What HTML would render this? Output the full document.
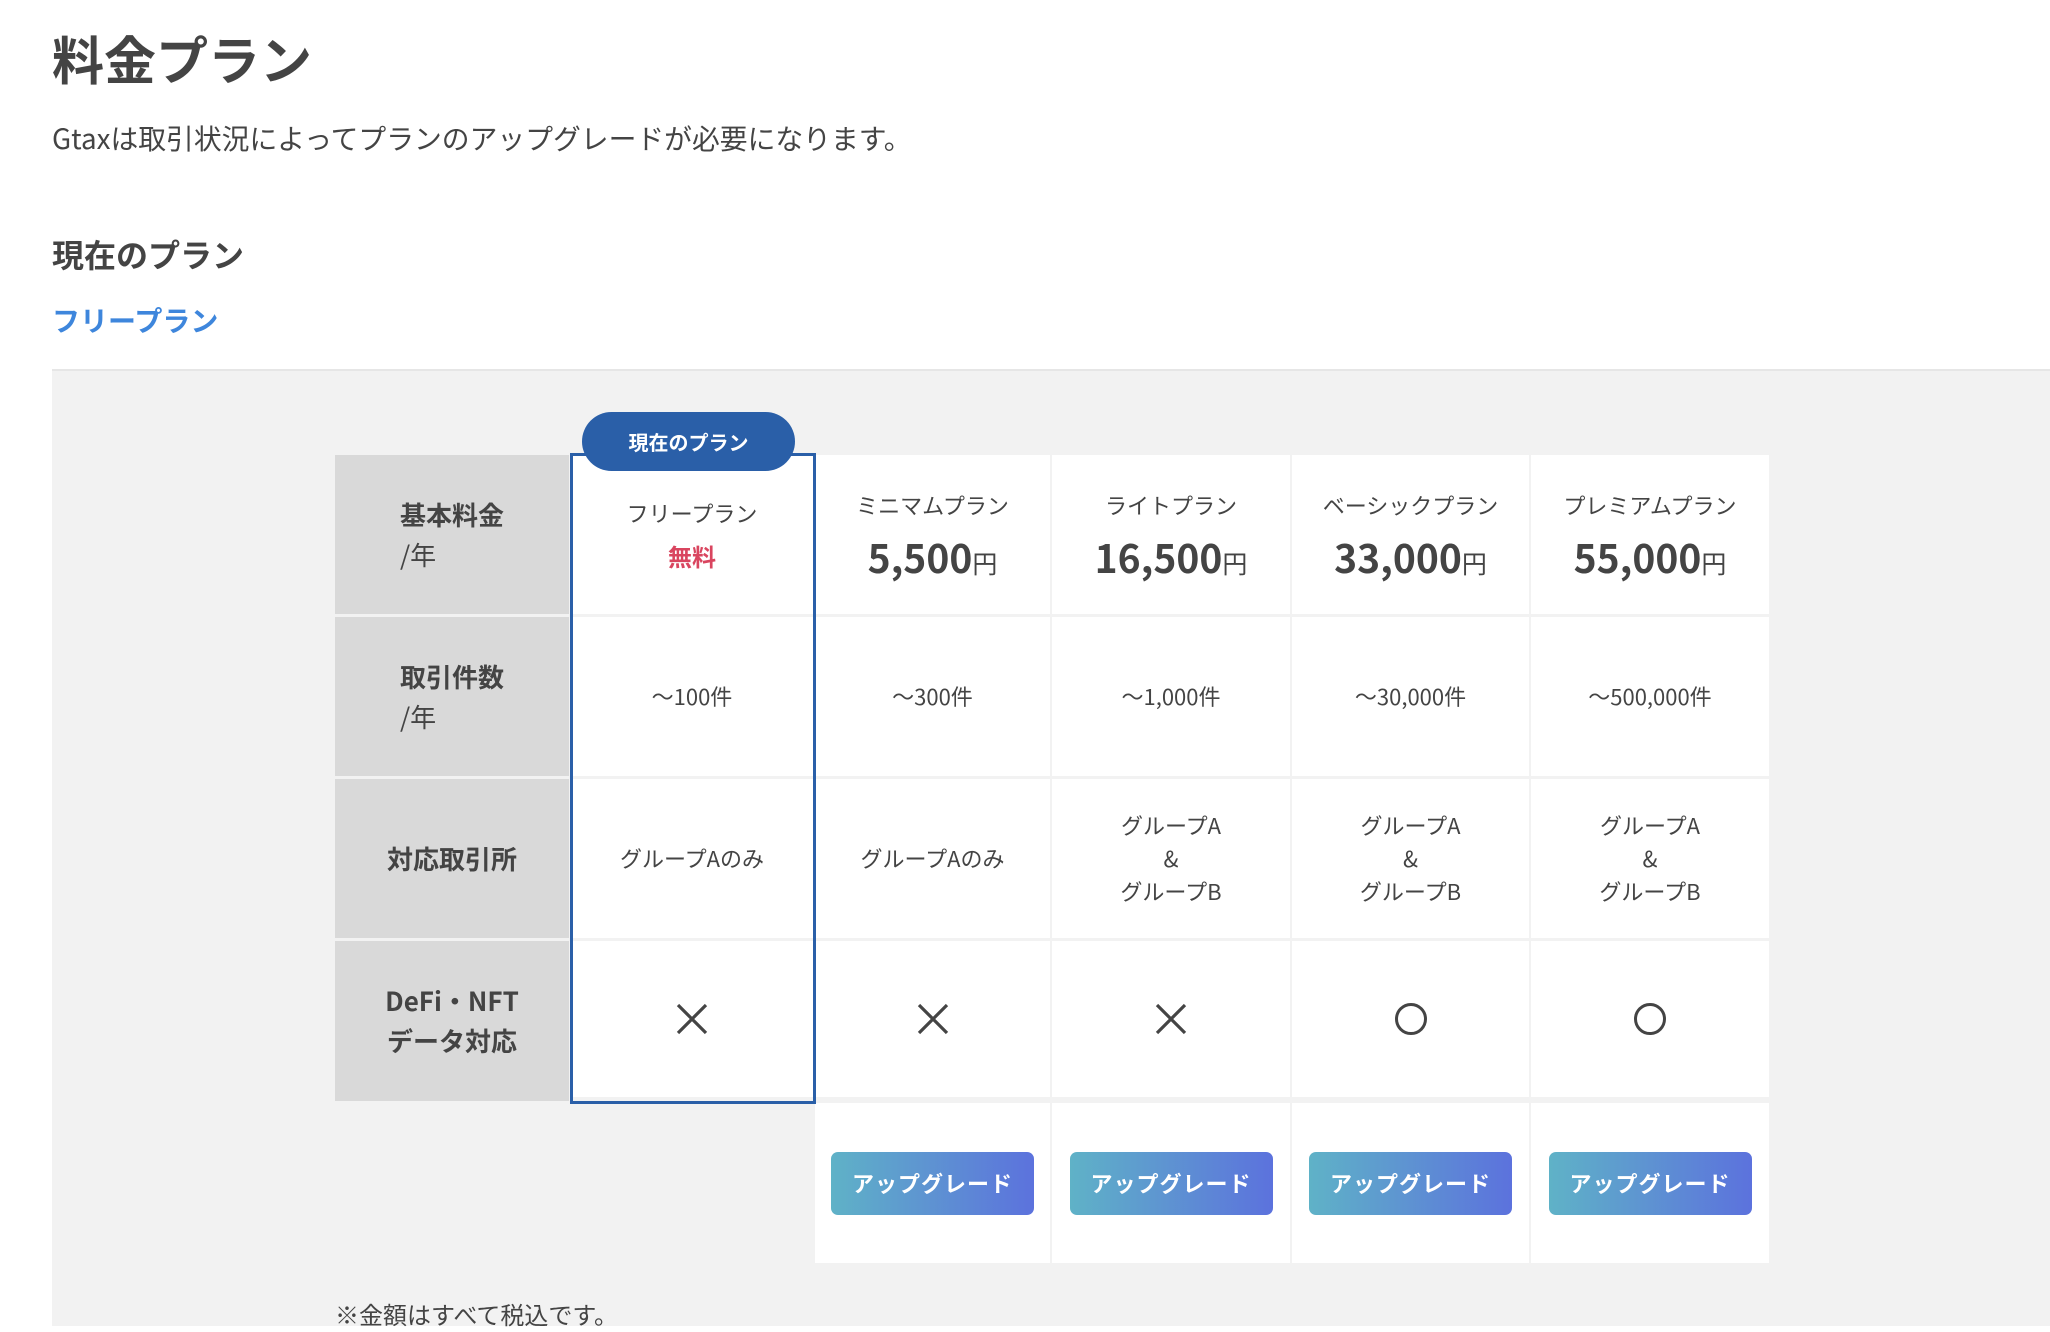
<!DOCTYPE html>
<html><head><meta charset="utf-8"><style>
*{margin:0;padding:0;box-sizing:border-box}
body{width:2050px;height:1326px;overflow:hidden;background:#fff;font-family:"Noto Sans CJK JP","Liberation Sans",sans-serif;color:#444;position:relative}
.a{position:absolute}
.c{position:absolute;display:flex;flex-direction:column;align-items:center;justify-content:center;text-align:center;background:#fff}
.l{background:#d9d9d9;font-weight:bold;font-size:26px;line-height:40px;color:#444}
.nm{font-size:22px;line-height:30px}
.pr{font-size:39px;font-weight:bold;line-height:50px;margin-top:12px}
.pr small{font-size:25px;font-weight:normal}
.t{font-size:22px;line-height:33px}
.btn{width:203px;height:63px;border-radius:7px;background:linear-gradient(90deg,#5fb2c7,#5c72dd);color:#fff;font-weight:bold;font-size:22px;display:flex;align-items:center;justify-content:center;letter-spacing:1px}
</style></head><body>
<div class="a" style="left:52px;top:20px;font-size:52px;font-weight:bold;line-height:76px">料金プラン</div>
<div class="a" style="left:52px;top:119px;font-size:27.8px;line-height:38px">Gtaxは取引状況によってプランのアップグレードが必要になります。</div>
<div class="a" style="left:52px;top:232px;font-size:32px;font-weight:bold;line-height:44px">現在のプラン</div>
<div class="a" style="left:52px;top:300px;font-size:28px;font-weight:bold;line-height:40px;color:#3e86dc">フリープラン</div>
<div class="a" style="left:52px;top:369px;width:1998px;height:957px;background:#f2f2f2;border-top:2px solid #e6e6e6"></div>

<div class="c l" style="left:335px;top:455px;width:234px;height:159px"><div style="text-align:left">基本料金<br><span style="font-weight:normal">/年</span></div></div>
<div class="c l" style="left:335px;top:617px;width:234px;height:159px"><div style="text-align:left">取引件数<br><span style="font-weight:normal">/年</span></div></div>
<div class="c l" style="left:335px;top:779px;width:234px;height:159px">対応取引所</div>
<div class="c l" style="left:335px;top:941px;width:234px;height:160px">DeFi・NFT<br>データ対応</div>

<div class="c" style="left:571px;top:455px;width:242px;height:159px;padding-top:2px"><div class="nm">フリープラン</div><div style="color:#d9455f;font-weight:bold;font-size:24px;line-height:36px;margin-top:10px">無料</div></div>
<div class="c" style="left:815px;top:455px;width:235px;height:159px;padding-top:8px"><div class="nm">ミニマムプラン</div><div class="pr">5,500<small>円</small></div></div>
<div class="c" style="left:1052px;top:455px;width:238px;height:159px;padding-top:8px"><div class="nm">ライトプラン</div><div class="pr">16,500<small>円</small></div></div>
<div class="c" style="left:1292px;top:455px;width:237px;height:159px;padding-top:8px"><div class="nm">ベーシックプラン</div><div class="pr">33,000<small>円</small></div></div>
<div class="c" style="left:1531px;top:455px;width:238px;height:159px;padding-top:8px"><div class="nm">プレミアムプラン</div><div class="pr">55,000<small>円</small></div></div>

<div class="c t" style="left:571px;top:617px;width:242px;height:159px">～100件</div>
<div class="c t" style="left:815px;top:617px;width:235px;height:159px">～300件</div>
<div class="c t" style="left:1052px;top:617px;width:238px;height:159px">～1,000件</div>
<div class="c t" style="left:1292px;top:617px;width:237px;height:159px">～30,000件</div>
<div class="c t" style="left:1531px;top:617px;width:238px;height:159px">～500,000件</div>

<div class="c t" style="left:571px;top:779px;width:242px;height:159px">グループAのみ</div>
<div class="c t" style="left:815px;top:779px;width:235px;height:159px">グループAのみ</div>
<div class="c t" style="left:1052px;top:779px;width:238px;height:159px">グループA<br>&amp;<br>グループB</div>
<div class="c t" style="left:1292px;top:779px;width:237px;height:159px">グループA<br>&amp;<br>グループB</div>
<div class="c t" style="left:1531px;top:779px;width:238px;height:159px">グループA<br>&amp;<br>グループB</div>

<div class="c" style="left:571px;top:941px;width:242px;height:156px"><svg width="34" height="34"><path d="M3 3L31 31M31 3L3 31" stroke="#444" stroke-width="3.2"/></svg></div>
<div class="c" style="left:815px;top:941px;width:235px;height:156px"><svg width="34" height="34"><path d="M3 3L31 31M31 3L3 31" stroke="#444" stroke-width="3.2"/></svg></div>
<div class="c" style="left:1052px;top:941px;width:238px;height:156px"><svg width="34" height="34"><path d="M3 3L31 31M31 3L3 31" stroke="#444" stroke-width="3.2"/></svg></div>
<div class="c" style="left:1292px;top:941px;width:237px;height:156px"><svg width="34" height="34"><circle cx="17" cy="17" r="14.5" fill="none" stroke="#444" stroke-width="3"/></svg></div>
<div class="c" style="left:1531px;top:941px;width:238px;height:156px"><svg width="34" height="34"><circle cx="17" cy="17" r="14.5" fill="none" stroke="#444" stroke-width="3"/></svg></div>

<div class="c" style="left:815px;top:1103px;width:235px;height:160px"><div class="btn">アップグレード</div></div>
<div class="c" style="left:1052px;top:1103px;width:238px;height:160px"><div class="btn">アップグレード</div></div>
<div class="c" style="left:1292px;top:1103px;width:237px;height:160px"><div class="btn">アップグレード</div></div>
<div class="c" style="left:1531px;top:1103px;width:238px;height:160px"><div class="btn">アップグレード</div></div>

<div class="a" style="left:570px;top:453px;width:246px;height:651px;border:3px solid #2a5fa8"></div>
<div class="a" style="left:582px;top:412px;width:213px;height:59px;border-radius:30px;background:#2a5fa8;color:#fff;font-weight:bold;font-size:20px;display:flex;align-items:center;justify-content:center">現在のプラン</div>

<div class="a" style="left:335px;top:1296px;font-size:24px;line-height:36px">※金額はすべて税込です。</div>
</body></html>
